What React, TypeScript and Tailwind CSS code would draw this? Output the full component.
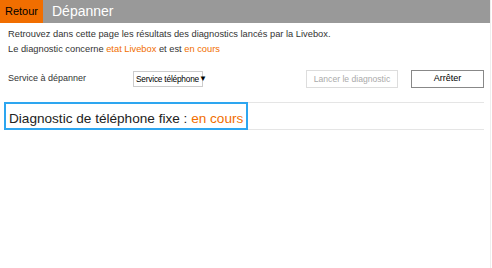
export default function App() {
  return (
    <div className="w-[492px] h-[268px] bg-white font-['Liberation_Sans',Arial,sans-serif] text-[#333] overflow-hidden flex whitespace-nowrap">
      <div className="w-[490px]">
        <div className="flex h-[23px]">
          <div className="w-[43px] bg-[#f16e00] flex items-center justify-center text-[11px] text-black">Retour</div>
          <div className="flex-1 bg-[#999999] flex items-center pl-[9px] pb-[1px] text-[14px] text-white">Dépanner</div>
        </div>
        <div className="px-[8px] pt-[4px] text-[9.3px] leading-[15px]">
          <p>Retrouvez dans cette page les résultats des diagnostics lancés par la Livebox.</p>
          <p>Le diagnostic concerne <span className="text-[#f16e00]">etat Livebox</span> et est <span className="text-[#f16e00]">en cours</span></p>
        </div>
        <div className="flex items-center mt-[13px] pl-[8px] pr-[6px] h-[18px] text-[9px]">
          <div className="w-[125px]">Service à dépanner</div>
          <div className="w-[70px] h-[16px] border border-[#ccc] flex items-center pl-[2px] text-[8.3px] text-black tracking-[-0.2px]">
            Service téléphone<span className="text-[8px] leading-none">▼</span>
          </div>
          <div className="flex-1" />
          <div className="w-[92px] h-[18px] border border-[#ddd] flex items-center justify-center text-[8.6px] text-[#aaa]">Lancer le diagnostic</div>
          <div className="w-[73px] h-[18px] ml-[13px] border border-[#888] flex items-center justify-center text-[9px] text-black">Arrêter</div>
        </div>
        <div className="mx-[4px] mr-[6px] mt-[14px] h-[28px] border-y border-[#e5e5e5] relative">
          <div className="absolute left-0 top-[-1px] w-[244px] h-[28px] border-2 border-[#2da6f0] flex items-center pl-[3px] pt-[6px] text-[13.6px] text-[#222]">
            Diagnostic de téléphone fixe :&nbsp;<span className="text-[#f16e00]">en cours</span>
          </div>
        </div>
      </div>
      <div className="w-[1px] h-full bg-[#eee]" />
    </div>
  )
}
